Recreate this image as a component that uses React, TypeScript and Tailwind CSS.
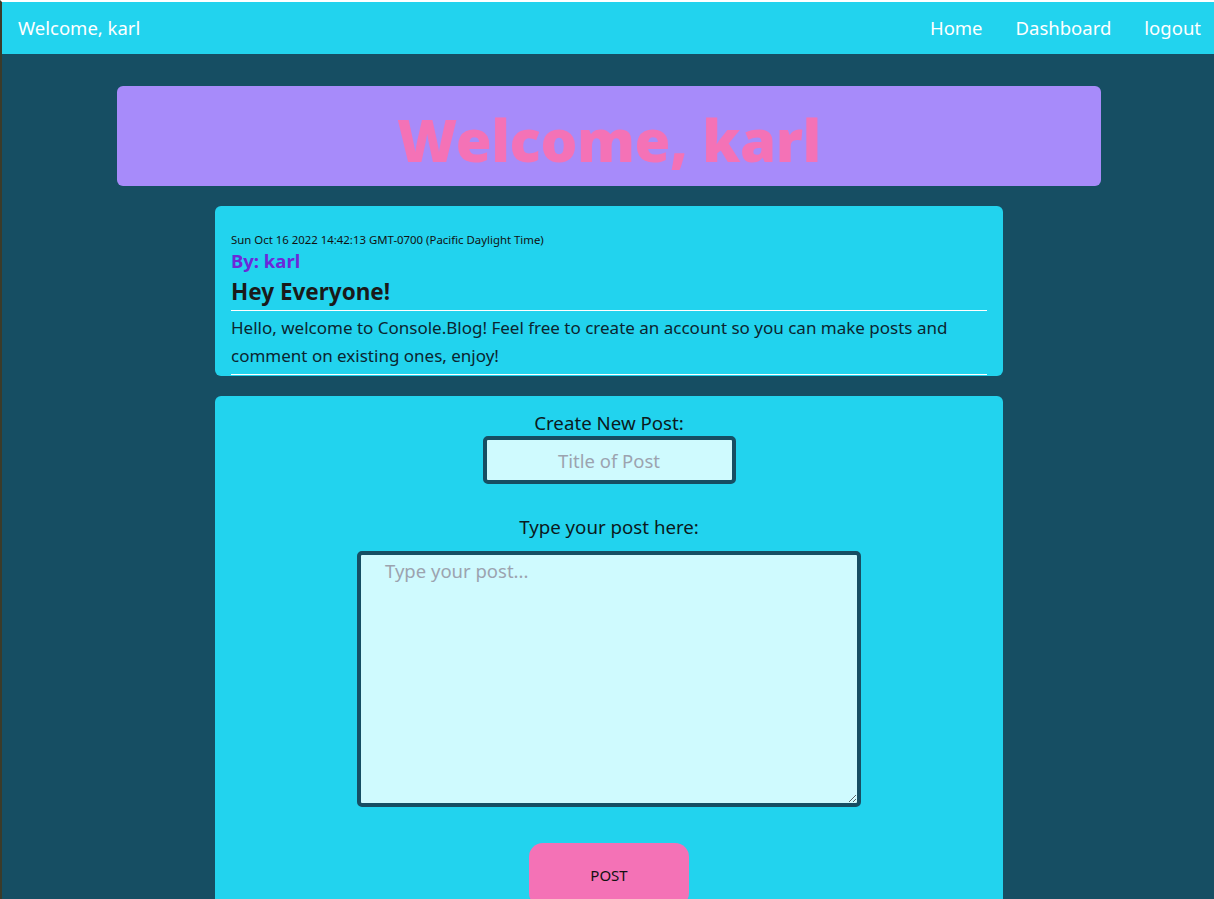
import React from "react";

export default function App() {
  return (
    <div
      className="min-h-[899px] bg-[#164e63] border-t-2 border-t-white border-l-2 border-l-[#3b3b2a]"
      style={{ fontFamily: '"Noto Sans", "Open Sans", sans-serif' }}
    >
      <nav className="h-[52px] bg-[#22d3ee] flex items-center justify-between pl-[16px] pr-[13px] text-white text-[18.5px]">
        <span>Welcome, karl</span>
        <div className="flex items-center gap-[33px]">
          <a>Home</a>
          <a>Dashboard</a>
          <a>logout</a>
        </div>
      </nav>

      <main className="w-[984px] ml-[115px] pt-[32px]">
        <div className="h-[100px] rounded-[6px] bg-[#a78bfa] flex items-center justify-center pt-[8px]">
          <h1 className="text-[58px] font-black text-[#f472b6] leading-none tracking-[-0.4px]">
            Welcome, karl
          </h1>
        </div>

        <div className="w-[788px] mx-auto mt-[20px] flex flex-col gap-[20px]">
          <div className="rounded-[6px] bg-[#22d3ee] pt-[27px] px-[16px] h-[170px]">
            <div className="text-[11.4px] leading-[14px] text-[#111]">
              Sun Oct 16 2022 14:42:13 GMT-0700 (Pacific Daylight Time)
            </div>
            <div className="text-[18.5px] leading-[24px] font-bold text-[#6d28d9] mt-[2px]">
              By: karl
            </div>
            <div className="text-[22.5px] leading-[30px] font-bold text-[#1a1a1a] mt-[4px] pb-[3px] border-b border-white">
              Hey Everyone!
            </div>
            <p className="text-[17px] leading-[28px] text-[#0b2530] pt-[3px] pb-[4px] border-b border-white">
              Hello, welcome to Console.Blog! Feel free to create an account so you can make posts and comment on existing ones, enjoy!
            </p>
          </div>

          <div className="rounded-t-[6px] bg-[#22d3ee] h-[520px] flex flex-col items-center pt-[14px]">
            <label className="text-[18.7px] leading-[26px] text-[#0b1a20]">Create New Post:</label>
            <input
              placeholder="Title of Post"
              className="w-[253px] h-[48px] rounded-[5px] border-4 border-[#164e63] bg-[#cffafe] text-center text-[18.5px] placeholder:text-[#9ca3af] outline-none"
            />
            <label className="text-[18.7px] leading-[26px] text-[#0b1a20] mt-[30px]">Type your post here:</label>
            <textarea
              placeholder="Type your post..."
              className="mt-[11px] w-[504px] h-[256px] rounded-[5px] border-4 border-[#164e63] bg-[#cffafe] text-[18.5px] px-[24px] pt-[2px] placeholder:text-[#9ca3af] outline-none"
            />
            <button className="mt-[36px] w-[160px] h-[64px] rounded-[14px] bg-[#f472b6] text-[15px] text-[#111]">
              POST
            </button>
          </div>
        </div>
      </main>
    </div>
  );
}
